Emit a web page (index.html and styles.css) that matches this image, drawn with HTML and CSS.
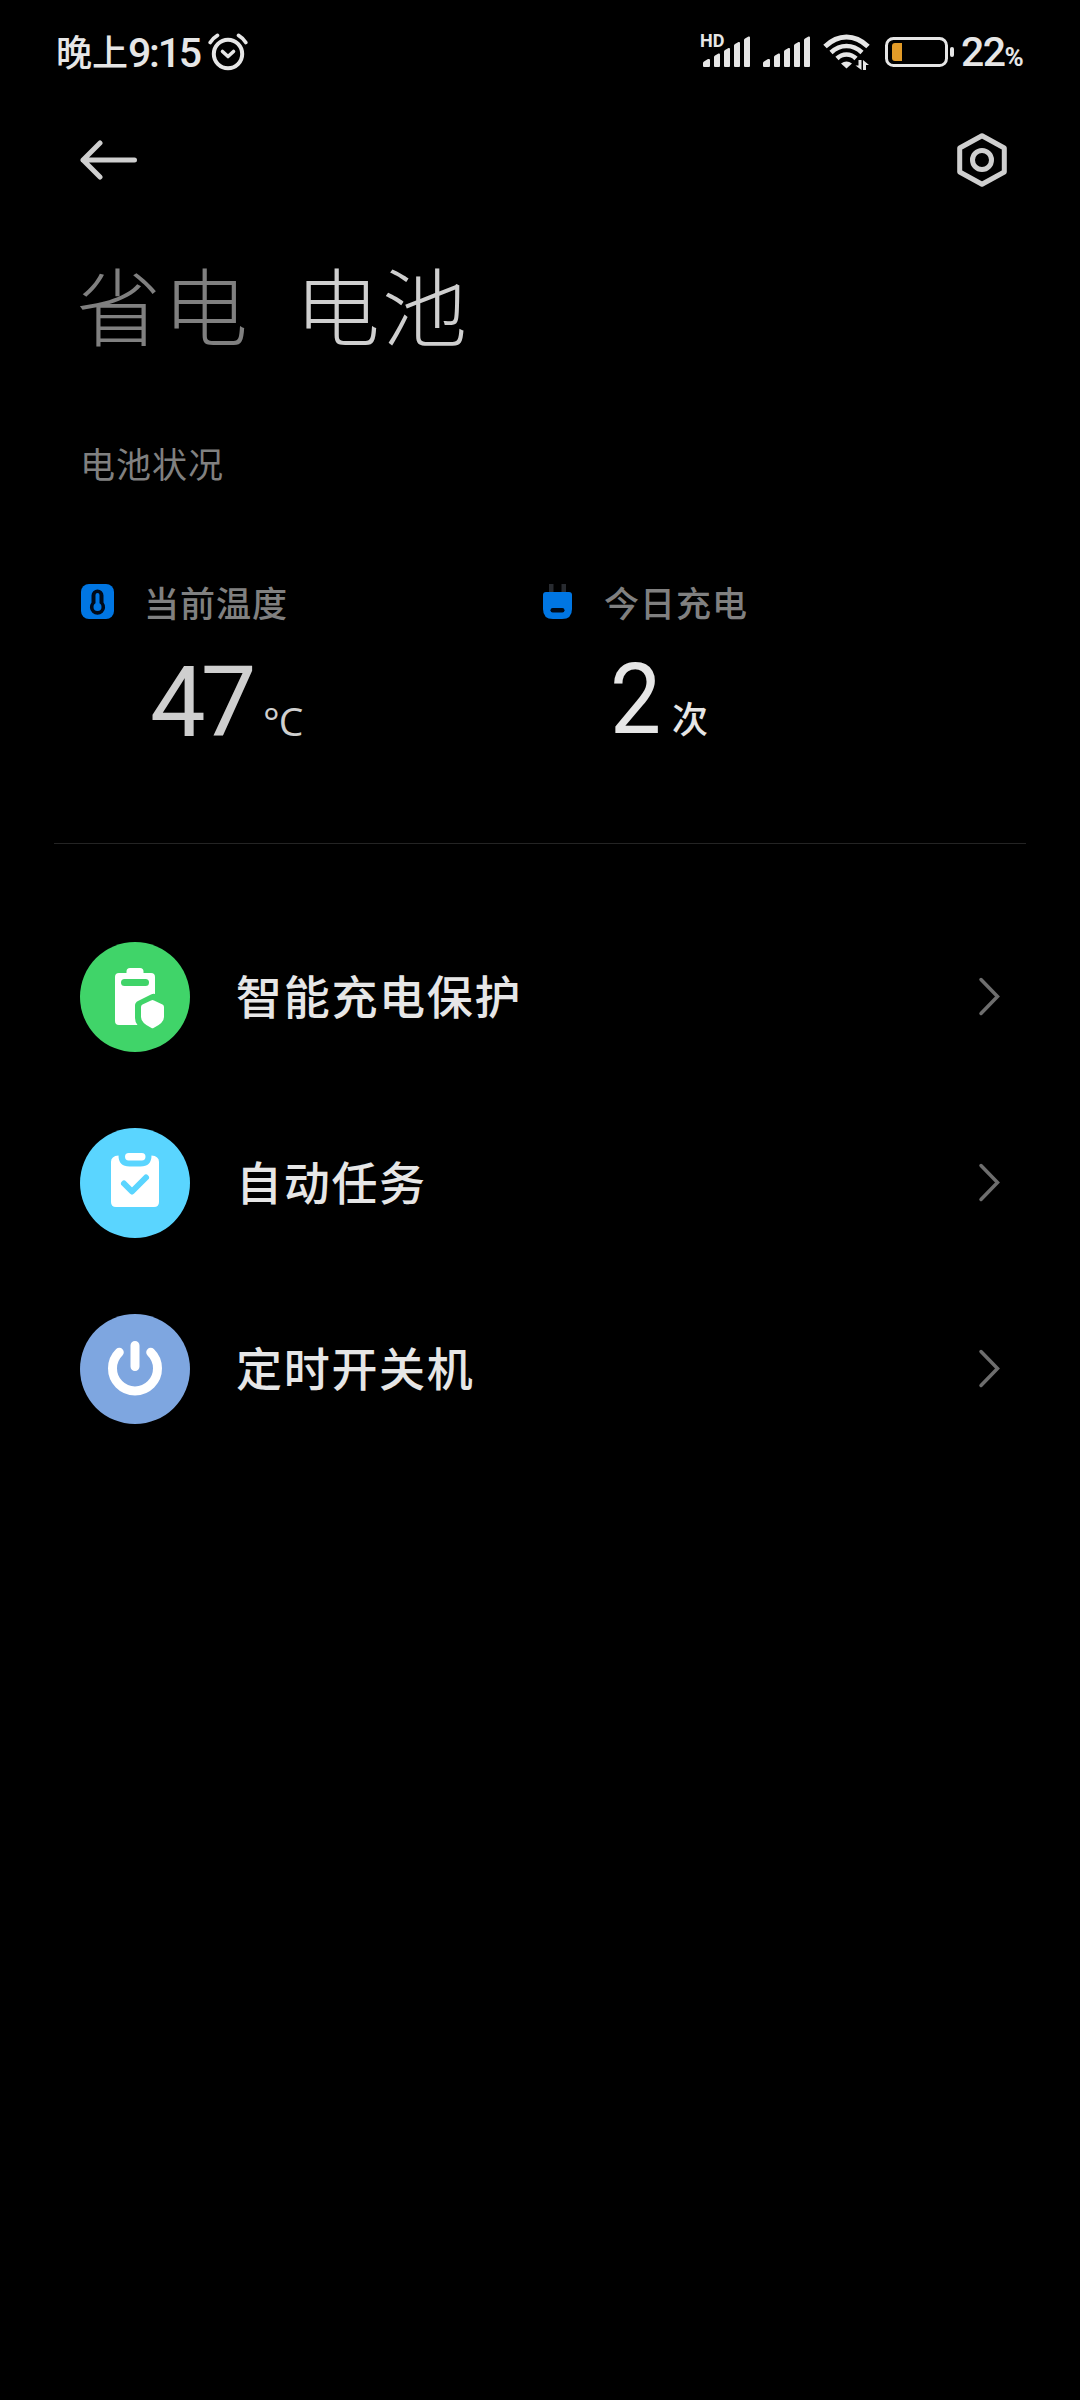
FILE: index.html
```html
<!DOCTYPE html>
<html lang="zh-CN">
<head>
    <meta charset="UTF-8">
    <title>电池</title>
    <link rel="stylesheet" href="styles.css">
</head>
<body>
    <div class="status">
        <span class="status-day">晚上</span>
        <span class="status-time">9:15</span>
        <svg class="alarm" width="40" height="38" viewBox="0 0 40 38" fill="none" stroke="#e6e6e6" stroke-linecap="round">
            <circle cx="20" cy="21" r="14.2" stroke-width="4"/>
            <path d="M2.2 9.5C4 6.5 6.5 4.2 9.5 2.4M37.8 9.5C36 6.5 33.5 4.2 30.5 2.4" stroke-width="3.6"/>
            <path d="M14.5 18.5L20 23.5L25.500 18.500" stroke-width="3.6" stroke-linejoin="round"/>
        </svg>
        <svg class="signal" width="52" height="36" viewBox="0 0 52 36" fill="#e6e6e6">
            <text class="hd" x="0" y="13">HD</text>
            <path d="M3 29Q3 28 4 27.500L8 25Q10 24.500 10 26V32Q10 33 9 33H4Q3 33 3 32ZM14 23Q14 22 15 21.500L18.500 19.500Q20 19 20 20.500V32Q20 33 19 33H15Q14 33 14 32ZM24 17.500Q24 16.500 25 16L28.500 14Q30 13.500 30 15V32Q30 33 29 33H25Q24 33 24 32ZM34 11.500Q34 10.500 35 10L38.500 8Q40 7.500 40 9V32Q40 33 39 33H35Q34 33 34 32ZM44 6Q44 5 45 4.500L48.500 2.500Q50 2 50 3.500V32Q50 33 49 33H45Q44 33 44 32Z"/>
        </svg>
        <svg class="signal signal-two" width="52" height="36" viewBox="0 0 52 36" fill="#e6e6e6">
            <path d="M3 29Q3 28 4 27.500L8 25Q10 24.500 10 26V32Q10 33 9 33H4Q3 33 3 32ZM14 23Q14 22 15 21.500L18.500 19.500Q20 19 20 20.500V32Q20 33 19 33H15Q14 33 14 32ZM24 17.500Q24 16.500 25 16L28.500 14Q30 13.500 30 15V32Q30 33 29 33H25Q24 33 24 32ZM34 11.500Q34 10.500 35 10L38.500 8Q40 7.500 40 9V32Q40 33 39 33H35Q34 33 34 32ZM44 6Q44 5 45 4.500L48.500 2.500Q50 2 50 3.500V32Q50 33 49 33H45Q44 33 44 32Z"/>
        </svg>
        <svg class="wifi" width="48" height="36" viewBox="0 0 48 36" fill="none" stroke="#e6e6e6">
            <path d="M2 12.500Q12 3 23.500 3T45 12.500" stroke-width="5"/>
            <path d="M8 18.500Q15 12 23.500 12T39 18.500" stroke-width="4.600"/>
            <path d="M14 24.500Q18 20.500 23.500 20.500T33 24.500" stroke-width="4.600"/>
            <path d="M18 29.500Q23.500 25.500 29 29.500L23.500 34.500Z" fill="#e6e6e6" stroke="none"/>
            <path d="M38.500 26V36L32.500 31.500H35.500V26ZM40 36V26L46 31H43V36Z" fill="#e6e6e6" stroke="none"/>
        </svg>
        <svg class="battery" width="70" height="32" viewBox="0 0 70 32">
            <rect x="1.500" y="2.500" width="60" height="27" rx="7" fill="none" stroke="#e6e6e6" stroke-width="3"/>
            <path d="M17 7V25H10Q7 25 7 22V10Q7 7 10 7Z" fill="#e29b28"/>
            <rect x="65" y="11" width="4" height="10" rx="2" fill="#e6e6e6"/>
        </svg>
        <span class="percent">22<small>%</small></span>
    </div>

    <div class="header">
        <svg width="58" height="42" viewBox="0 0 58 42" fill="none" stroke="#cfcfcf" stroke-width="5" stroke-linecap="round" stroke-linejoin="round">
            <path d="M20 4L3 21L20 38M3 21H54.500"/>
        </svg>
        <svg width="50" height="54" viewBox="0 0 50 54" fill="none" stroke="#cfcfcf" stroke-width="5" stroke-linejoin="round">
            <path d="M25 2.800L47.300 15V39L25 51.200L2.700 39V15Z"/>
            <circle cx="25" cy="27" r="9.500"/>
        </svg>
    </div>

    <div class="tabs">
        <span class="tab">省电</span>
        <span class="tab active">电池</span>
    </div>

    <div class="subtitle">电池状况</div>

    <div class="stats">
        <div class="stat">
            <div class="label">
                <svg width="35" height="36" viewBox="0 0 35 36">
                    <rect x="1" y="0" width="33" height="35" rx="8" fill="#0076e3"/>
                    <path d="M11.500 11.500a6 6 0 0 1 12 0V18.500a7.600 7.600 0 1 1-12 0Z" fill="#000a18"/>
                    <path d="M17.500 11V22" stroke="#0076e3" stroke-width="4" stroke-linecap="round"/>
                    <circle cx="17.500" cy="23" r="4" fill="#0076e3"/>
                </svg>
                <span>当前温度</span>
            </div>
            <div class="value dim"><span class="degrees">47</span><small class="unit">°C</small></div>
        </div>
        <div class="stat">
            <div class="label">
                <svg width="35" height="36" viewBox="0 0 35 36">
                    <path d="M9 0H13.500V8H9ZM21.500 0H26V8H21.500Z" fill="#282b30"/>
                    <path d="M3 11Q3 8 6 8H29Q32 8 32 11V25Q32 35 22 35H13Q3 35 3 25Z" fill="#0076e3"/>
                    <rect x="10.500" y="24" width="14" height="4.500" rx="2.200" fill="#000a18"/>
                </svg>
                <span>今日充电</span>
            </div>
            <div class="value"><span class="count">2</span><small class="times">次</small></div>
        </div>
    </div>

    <div class="list">
        <div class="item">
            <svg width="110" height="110" viewBox="0 0 110 110">
                <circle cx="55" cy="55" r="55" fill="#40d469"/>
                <path d="M35 35Q35 31 39 31H46.500V29.500Q46.500 26 50 26H60Q63.500 26 63.500 29.500V31H71Q75 31 75 35V52Q73 51.500 71 52.500L58 59Q55 60.500 55 63.500V76Q55 80 57.500 83H39Q35 83 35 79Z" fill="#fff"/>
                <rect x="41" y="37" width="28" height="7" rx="3.500" fill="#40d469"/>
                <path d="M71 58.500Q72.500 57.700 74 58.500L82.500 62.500Q84 63.300 84 65V75Q84 81 73.500 86Q72.500 86.500 71.500 86Q61 81 61 75V65Q61 63.300 62.500 62.500Z" fill="#fff"/>
            </svg>
            <span>智能充电保护</span>
            <svg class="more" width="22" height="40" viewBox="0 0 22 40"><path d="M3 2.500L19.500 19.500L3 36.500"/></svg>
        </div>
        <div class="item">
            <svg width="110" height="110" viewBox="0 0 110 110">
                <circle cx="55" cy="55" r="55" fill="#5ad5ff"/>
                <path d="M38.500 27.500Q38.500 38.500 49.500 38.500H60.500Q71.500 38.500 71.500 27.500Q79 28 79 34V74Q79 79 74 79H36Q31 79 31 74V34Q31 28 38.500 27.500Z" fill="#fff"/>
                <rect x="45" y="25" width="20.500" height="7.500" rx="3.700" fill="#fff"/>
                <path d="M44 55.500L52 63.500L66 49.500" fill="none" stroke="#5ad5ff" stroke-width="6" stroke-linecap="round" stroke-linejoin="round"/>
            </svg>
            <span>自动任务</span>
            <svg class="more" width="22" height="40" viewBox="0 0 22 40"><path d="M3 2.500L19.500 19.500L3 36.500"/></svg>
        </div>
        <div class="item">
            <svg width="110" height="110" viewBox="0 0 110 110" fill="none" stroke="#fff" stroke-width="9" stroke-linecap="round">
                <circle cx="55" cy="55" r="55" fill="#7ea6e0" stroke="none"/>
                <path d="M39.300 38.300A22.500 22.500 0 1 0 70.700 38.300M55 31.500V52.500"/>
            </svg>
            <span>定时开关机</span>
            <svg class="more" width="22" height="40" viewBox="0 0 22 40"><path d="M3 2.500L19.500 19.500L3 36.500"/></svg>
        </div>
    </div>
</body>
</html>
```
FILE: styles.css
```css
html, body {
    margin: 0;
    padding: 0;
    background: #000;
}
body {
    width: 1080px;
    height: 2400px;
    overflow: hidden;
    color: #e6e6e6;
    font-family: "Noto Sans CJK SC", sans-serif;
}
svg {
    display: block;
    flex: none;
}
/* 状态栏 */
.status {
    display: flex;
    align-items: center;
    height: 104px;
    padding: 0 54px 0 56px;
    white-space: nowrap;
}
.status-day {
    font-size: 36px;
    font-weight: 500;
    line-height: 48px;
    margin-top: -4px;
}
.status-time {
    width: 79px;
    padding-top: 1px;
    font-family: Roboto, sans-serif;
    font-size: 41px;
    font-weight: 500;
    line-height: 48px;
    letter-spacing: -2.200px;
}
.alarm {
    margin-left: 1px;
}
.signal {
    margin-left: auto;
    overflow: visible;
}
.signal-two {
    margin-left: 8px;
}
.hd {
    font-family: Roboto, sans-serif;
    font-size: 18px;
    font-weight: 700;
}
.wifi {
    margin-left: 11px;
}
.battery {
    margin-left: 14px;
}
.percent {
    width: 65px;
    margin-left: 6px;
    padding-top: 5px;
    font-family: Roboto, sans-serif;
    font-size: 41px;
    font-weight: 500;
    line-height: 48px;
    letter-spacing: -1.500px;
}
.percent small {
    font-size: 26px;
    font-weight: 700;
}
/* 顶部 */
.header {
    display: flex;
    align-items: center;
    justify-content: space-between;
    height: 112px;
    padding: 0 73px 0 80px;
}
.tabs {
    display: flex;
    gap: 45px;
    padding: 27px 0 0 76px;
    font-size: 85px;
    line-height: 120px;
    letter-spacing: 2px;
    font-weight: 300;
}
.tab {
    color: #808080;
}
.tab.active {
    color: #cfcfcf;
}
.subtitle {
    padding: 75px 80px 0;
    color: #808080;
    font-size: 35px;
    line-height: 50px;
    letter-spacing: 1px;
}
/* 温度和充电次数 */
.stats {
    display: flex;
    height: 266px;
    margin: 0 54px;
    padding: 89px 0 0 26px;
    border-bottom: 1px solid #242424;
}
.stat {
    width: 460px;
}
.label {
    display: flex;
    align-items: center;
    gap: 29px;
    color: #808080;
    font-size: 35px;
    font-weight: 500;
    line-height: 50px;
    letter-spacing: 1px;
}
.value {
    display: flex;
    align-items: baseline;
    padding: 17px 0 0 70px;
    font-family: Roboto, sans-serif;
    font-size: 99px;
    line-height: 116px;
}
.value.dim {
    color: #cfcfcf;
}
.degrees {
    width: 113px;
    letter-spacing: -5px;
}
.unit {
    font-family: "Open Sans", sans-serif;
    font-size: 39px;
    font-weight: 400;
    line-height: 50px;
    letter-spacing: -1px;
}
.count {
    width: 52px;
    transform: translateY(-3px) scaleX(.92);
    transform-origin: left;
}
.times {
    margin-left: 10px;
    font-family: "Noto Sans CJK SC", sans-serif;
    font-size: 36px;
    font-weight: 500;
    line-height: 50px;
    transform: translateY(-3px);
}
/* 列表 */
.list {
    padding: 60px 80px 0;
}
.item {
    display: flex;
    align-items: center;
    height: 186px;
}
.item span {
    margin: -7px 0 0 46px;
    font-size: 46px;
    font-weight: 500;
    letter-spacing: 1.700px;
}
.more {
    margin-left: auto;
    fill: none;
    stroke: #6e6e6e;
    stroke-width: 3.500;
    stroke-linecap: round;
}
```
